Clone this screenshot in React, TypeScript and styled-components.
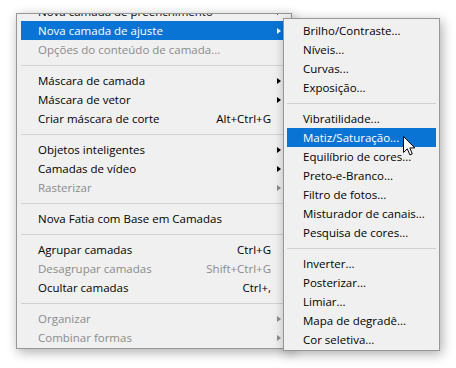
import styled, { createGlobalStyle } from 'styled-components';

const GlobalStyle = createGlobalStyle`
  html, body {
    margin: 0;
    background: #ffffff;
  }
  body {
    font-family: "Open Sans", "Noto Sans", "Liberation Sans", sans-serif;
    font-size: 11.5px;
    color: #000000;
  }
`;

const Stage = styled.div`
  position: relative;
  width: 456px;
  height: 368px;
  padding: 13px 0 0 16px;
  box-sizing: border-box;
  overflow: hidden;
`;

const MenuPanel = styled.div`
  background: #f0f0f0;
  border: 1px solid #979797;
  box-shadow: 2px 3px 11px rgba(0, 0, 0, 0.33);
  box-sizing: border-box;
  overflow: hidden;
`;

const MainMenu = styled(MenuPanel)`
  width: 276px;
  padding: 0 4px 1px;
`;

const SubMenu = styled(MenuPanel)`
  position: absolute;
  left: 283px;
  top: 18px;
  width: 157px;
  padding: 2px 3px 1px;
`;

const Item = styled.div<{ $active?: boolean; $disabled?: boolean; $clipped?: boolean; $sub?: boolean }>`
  display: grid;
  grid-template-columns: 1fr auto 16px;
  align-items: center;
  height: 19px;
  padding-left: ${(p) => (p.$sub ? '16px' : '17px')};
  margin-top: ${(p) => (p.$clipped ? '-12px' : '0')};
  background: ${(p) => (p.$active ? '#0a74d4' : 'transparent')};
  color: ${(p) => (p.$active ? '#ffffff' : p.$disabled ? '#8b8b8b' : '#000000')};
  white-space: nowrap;
  line-height: 19px;
`;

const Shortcut = styled.span`
  text-align: right;
`;

const Arrow = styled.span<{ $tone: 'dark' | 'light' | 'dim' }>`
  justify-self: start;
  margin-left: 6px;
  width: 0;
  height: 0;
  border-top: 3.5px solid transparent;
  border-bottom: 3.5px solid transparent;
  border-left: 4px solid
    ${(p) => (p.$tone === 'light' ? '#ffffff' : p.$tone === 'dim' ? '#8b8b8b' : '#000000')};
`;

const Separator = styled.div`
  height: 12px;
  display: flex;
  align-items: center;

  &::before {
    content: '';
    flex: 1;
    border-top: 1px solid #d2d2d2;
  }
`;

const Cursor = styled.svg`
  position: absolute;
  left: 403px;
  top: 136px;
`;

type Row =
  | { sep: true }
  | {
      sep?: false;
      label: string;
      shortcut?: string;
      arrow?: boolean;
      disabled?: boolean;
      active?: boolean;
      clipped?: boolean;
    };

const mainRows: Row[] = [
  { label: 'Nova camada de preenchimento', arrow: true, clipped: true },
  { label: 'Nova camada de ajuste', arrow: true, active: true },
  { label: 'Opções do conteúdo de camada...', disabled: true },
  { sep: true },
  { label: 'Máscara de camada', arrow: true },
  { label: 'Máscara de vetor', arrow: true },
  { label: 'Criar máscara de corte', shortcut: 'Alt+Ctrl+G' },
  { sep: true },
  { label: 'Objetos inteligentes', arrow: true },
  { label: 'Camadas de vídeo', arrow: true },
  { label: 'Rasterizar', arrow: true, disabled: true },
  { sep: true },
  { label: 'Nova Fatia com Base em Camadas' },
  { sep: true },
  { label: 'Agrupar camadas', shortcut: 'Ctrl+G' },
  { label: 'Desagrupar camadas', shortcut: 'Shift+Ctrl+G', disabled: true },
  { label: 'Ocultar camadas', shortcut: 'Ctrl+,' },
  { sep: true },
  { label: 'Organizar', arrow: true, disabled: true },
  { label: 'Combinar formas', arrow: true, disabled: true },
];

const subRows: Row[] = [
  { label: 'Brilho/Contraste...' },
  { label: 'Níveis...' },
  { label: 'Curvas...' },
  { label: 'Exposição...' },
  { sep: true },
  { label: 'Vibratilidade...' },
  { label: 'Matiz/Saturação...', active: true },
  { label: 'Equilíbrio de cores...' },
  { label: 'Preto-e-Branco...' },
  { label: 'Filtro de fotos...' },
  { label: 'Misturador de canais...' },
  { label: 'Pesquisa de cores...' },
  { sep: true },
  { label: 'Inverter...' },
  { label: 'Posterizar...' },
  { label: 'Limiar...' },
  { label: 'Mapa de degradê...' },
  { label: 'Cor seletiva...' },
];

function MenuRows({ rows, sub }: { rows: Row[]; sub?: boolean }) {
  return (
    <>
      {rows.map((r, i) =>
        r.sep ? (
          <Separator key={i} />
        ) : (
          <Item
            key={i}
            $active={r.active}
            $disabled={r.disabled}
            $clipped={r.clipped}
            $sub={sub}
          >
            <span>{r.label}</span>
            <Shortcut>{r.shortcut}</Shortcut>
            {r.arrow ? (
              <Arrow $tone={r.active ? 'light' : r.disabled ? 'dim' : 'dark'} />
            ) : (
              <span />
            )}
          </Item>
        ),
      )}
    </>
  );
}

export default function App() {
  return (
    <>
      <GlobalStyle />
      <Stage>
        <MainMenu>
          <MenuRows rows={mainRows} />
        </MainMenu>
        <SubMenu>
          <MenuRows rows={subRows} sub />
        </SubMenu>
        <Cursor width="13" height="21" viewBox="0 0 13 21">
          <path
            d="M0.5 0.5 L0.5 16.5 L4.3 12.8 L6.9 18.9 L9.3 17.9 L6.8 11.9 L11.8 11.9 Z"
            fill="#ffffff"
            stroke="#000000"
            strokeWidth="1"
            strokeLinejoin="miter"
          />
        </Cursor>
      </Stage>
    </>
  );
}
